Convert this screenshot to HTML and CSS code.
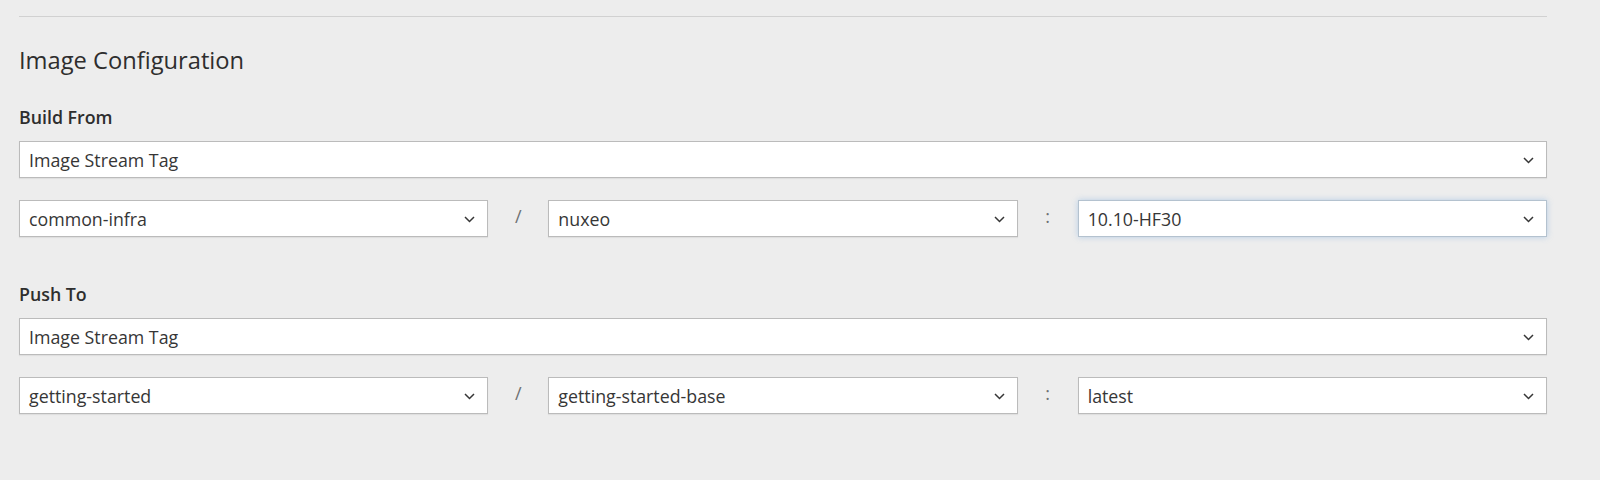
FILE: index.html
```html
<!DOCTYPE html>
<html lang="en">
<head>
<meta charset="utf-8">
<title>Image Configuration</title>
<link rel="stylesheet" href="styles.css">
</head>
<body>
<div class="page">
  <div class="divider"></div>
  <h2 class="title">Image Configuration</h2>

  <section class="section first">
    <div class="label">Build From</div>
    <div class="select">
      <span class="value">Image Stream Tag</span>
      <svg class="chev" width="11" height="7" viewBox="0 0 11 7"><path d="M1 1l4.5 4.5L10 1" fill="none" stroke="#363636" stroke-width="1.5"/></svg>
    </div>
    <div class="row">
      <div class="select">
        <span class="value">common-infra</span>
        <svg class="chev" width="11" height="7" viewBox="0 0 11 7"><path d="M1 1l4.5 4.5L10 1" fill="none" stroke="#363636" stroke-width="1.5"/></svg>
      </div>
      <div class="sep">/</div>
      <div class="select">
        <span class="value">nuxeo</span>
        <svg class="chev" width="11" height="7" viewBox="0 0 11 7"><path d="M1 1l4.5 4.5L10 1" fill="none" stroke="#363636" stroke-width="1.5"/></svg>
      </div>
      <div class="sep">:</div>
      <div class="select focused">
        <span class="value">10.10-HF30</span>
        <svg class="chev" width="11" height="7" viewBox="0 0 11 7"><path d="M1 1l4.5 4.5L10 1" fill="none" stroke="#363636" stroke-width="1.5"/></svg>
      </div>
    </div>
  </section>

  <section class="section second">
    <div class="label">Push To</div>
    <div class="select">
      <span class="value">Image Stream Tag</span>
      <svg class="chev" width="11" height="7" viewBox="0 0 11 7"><path d="M1 1l4.5 4.5L10 1" fill="none" stroke="#363636" stroke-width="1.5"/></svg>
    </div>
    <div class="row">
      <div class="select">
        <span class="value">getting-started</span>
        <svg class="chev" width="11" height="7" viewBox="0 0 11 7"><path d="M1 1l4.5 4.5L10 1" fill="none" stroke="#363636" stroke-width="1.5"/></svg>
      </div>
      <div class="sep">/</div>
      <div class="select">
        <span class="value">getting-started-base</span>
        <svg class="chev" width="11" height="7" viewBox="0 0 11 7"><path d="M1 1l4.5 4.5L10 1" fill="none" stroke="#363636" stroke-width="1.5"/></svg>
      </div>
      <div class="sep">:</div>
      <div class="select">
        <span class="value">latest</span>
        <svg class="chev" width="11" height="7" viewBox="0 0 11 7"><path d="M1 1l4.5 4.5L10 1" fill="none" stroke="#363636" stroke-width="1.5"/></svg>
      </div>
    </div>
  </section>
</div>
</body>
</html>
```

FILE: styles.css
```css
html, body {
  margin: 0;
  padding: 0;
  background: #ededed;
}
body {
  font-family: "Open Sans", "Liberation Sans", sans-serif;
  color: #363636;
  height: 480px;
  overflow: hidden;
}
.page {
  width: 1528px;
  padding-left: 19px;
  padding-top: 16px;
}
.divider {
  height: 1px;
  background: #d1d1d1;
}
.title {
  margin: 27px 0 0 0;
  font-size: 23.7px;
  line-height: 32px;
  font-weight: 400;
  color: #2e2e2e;
}
.section.first {
  margin-top: 29px;
}
.section.second {
  margin-top: 45px;
}
.label {
  font-size: 17.8px;
  line-height: 24px;
  font-weight: 600;
  color: #2e2e2e;
  margin-bottom: 12px;
}
.select {
  box-sizing: border-box;
  height: 37px;
  background: #fff;
  border: 1px solid #bbbbbb;
  box-shadow: 0 1px 1px rgba(0, 0, 0, 0.06);
  display: flex;
  align-items: center;
  justify-content: space-between;
  padding: 0 12px 0 9px;
  font-size: 17.8px;
  color: #363636;
}
.select.focused {
  border-color: #b4c2cf;
  box-shadow: 0 0 6px rgba(80, 150, 220, 0.35);
}
.chev {
  display: block;
  margin-top: 2px;
}
.row {
  margin-top: 22px;
  display: grid;
  grid-template-columns: 1fr 60px 1fr 60px 1fr;
  align-items: center;
}
.sep {
  text-align: center;
  font-size: 18px;
  color: #6f7173;
  margin-top: -6px;
}
```
